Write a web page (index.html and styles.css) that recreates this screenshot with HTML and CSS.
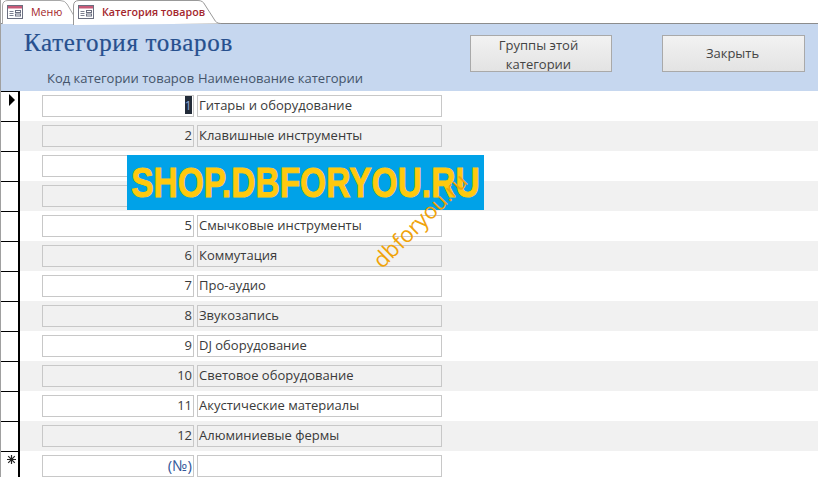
FILE: index.html
```html
<!DOCTYPE html>
<html lang="en">
<head>
  <meta charset="UTF-8" />
  <title>Категория товаров</title>
  <link rel="stylesheet" href="styles.css">
</head>
<body>
  <svg width="0" height="0" class="defs">
    <symbol id="form-icon" viewBox="0 0 16 14">
      <rect x="0.5" y="0.5" width="15" height="13" fill="#fff" stroke="#6b6f80"/>
      <rect x="1" y="1" width="14" height="2.5" fill="#c85a78"/>
      <path d="M2.5 6.5h4M2.5 8.5h4M2.5 10.5h4" stroke="#7c8090"/>
      <rect x="8.5" y="5.5" width="5" height="2" fill="#fff" stroke="#6b6f80"/>
      <rect x="8.5" y="9" width="5" height="2" fill="#fff" stroke="#6b6f80"/>
    </symbol>
  </svg>

  <div class="tabs">
    <div class="tab tab-menu">
      <svg class="tab-shape" width="73" height="24"><path d="M.5 24V6Q.5.5 6 .5H58Q63 .5 65 4L71.5 15V24" fill="#fff" stroke="#a8a8a8"/></svg>
      <svg class="tab-icon"><use href="#form-icon"/></svg>
      <span>Меню</span>
    </div>
    <div class="tab tab-active">
      <svg class="tab-shape" width="150" height="25"><path d="M.5 25V6Q.5.5 6 .5H125Q130 .5 132 5L141 19Q143 23.5 148 23.5" fill="#fff" stroke="#999"/></svg>
      <svg class="tab-icon"><use href="#form-icon"/></svg>
      <span>Категория товаров</span>
    </div>
  </div>

  <div class="form-header">
    <div class="header-top">
      <h1>Категория товаров</h1>
      <button class="btn btn-groups">Группы этой категории</button>
      <button class="btn btn-close">Закрыть</button>
    </div>
    <div class="labels">
      <span class="label-code">Код категории товаров</span>
      <span class="label-name">Наименование категории</span>
    </div>
  </div>

  <div class="rows">
    <div class="row">
      <div class="selector"><span class="arrow"></span></div>
      <div class="field field-code"><span class="caret">1</span></div>
      <div class="field field-name">Гитары и оборудование</div>
    </div>
    <div class="row">
      <div class="selector"></div>
      <div class="field field-code">2</div>
      <div class="field field-name">Клавишные инструменты</div>
    </div>
    <div class="row">
      <div class="selector"></div>
      <div class="field field-code"></div>
      <div class="field field-name"></div>
    </div>
    <div class="row">
      <div class="selector"></div>
      <div class="field field-code"></div>
      <div class="field field-name"></div>
    </div>
    <div class="row">
      <div class="selector"></div>
      <div class="field field-code">5</div>
      <div class="field field-name">Смычковые инструменты</div>
    </div>
    <div class="row">
      <div class="selector"></div>
      <div class="field field-code">6</div>
      <div class="field field-name">Коммутация</div>
    </div>
    <div class="row">
      <div class="selector"></div>
      <div class="field field-code">7</div>
      <div class="field field-name">Про-аудио</div>
    </div>
    <div class="row">
      <div class="selector"></div>
      <div class="field field-code">8</div>
      <div class="field field-name">Звукозапись</div>
    </div>
    <div class="row">
      <div class="selector"></div>
      <div class="field field-code">9</div>
      <div class="field field-name">DJ оборудование</div>
    </div>
    <div class="row">
      <div class="selector"></div>
      <div class="field field-code">10</div>
      <div class="field field-name">Световое оборудование</div>
    </div>
    <div class="row">
      <div class="selector"></div>
      <div class="field field-code">11</div>
      <div class="field field-name">Акустические материалы</div>
    </div>
    <div class="row">
      <div class="selector"></div>
      <div class="field field-code">12</div>
      <div class="field field-name">Алюминиевые фермы</div>
    </div>
    <div class="row">
      <div class="selector">
        <svg class="star" width="9" height="9" viewBox="0 0 9 9"><path d="M4.5 0v9M0 4.5h9M1.2 1.2l6.6 6.6M7.8 1.2L1.2 7.8" stroke="#222" stroke-width="1.2"/></svg>
      </div>
      <div class="field field-code new-id">(№)</div>
      <div class="field field-name"></div>
    </div>
  </div>

  <div class="banner"><span>SHOP.DBFORYOU.RU</span></div>
  <div class="stamp">dbforyou.ru</div>
</body>
</html>
```

FILE: styles.css
```css
html, body {
  height: 100%;
}

body {
  margin: 0;
  background-color: #fff;
  font-family: "Open Sans", "Noto Sans", sans-serif;
  font-size: 13px;
  color: #3a3a3a;
  overflow: hidden;
  position: relative;
}

/* grey edge of the document window */
body::before {
  content: "";
  position: absolute;
  left: 0;
  top: 0;
  bottom: 0;
  width: 1px;
  background-color: #a0a0a0;
  z-index: 2;
}

.defs {
  position: absolute;
}

.tabs {
  display: flex;
  height: 24px;
  box-sizing: border-box;
  padding-left: 2px;
  border-bottom: 1px solid #8c8c8c;
}

.tab {
  display: flex;
  align-items: center;
  gap: 8px;
  height: 23px;
  box-sizing: border-box;
  font-size: 10.7px;
  color: #a4262c;
  position: relative;
}

.tab-shape {
  position: absolute;
  left: 0;
  top: 0;
}

.tab-icon, .tab span {
  position: relative;
}

.tab-menu {
  width: 71px;
  padding-left: 5px;
}

.tab-active {
  width: 145px;
  padding-left: 5px;
  font-weight: 600;
}

.tab-icon {
  width: 16px;
  height: 14px;
  flex: none;
}

.form-header {
  height: 67px;
  background-color: #c6d7ef;
}

.header-top {
  display: flex;
  height: 46px;
}

h1 {
  margin: 4px 0 0 24px;
  width: 446px;
  font-family: "Liberation Serif", serif;
  font-size: 25px;
  font-weight: normal;
  line-height: 30px;
  letter-spacing: 0.7px;
  color: #27508e;
  -webkit-text-stroke: 0.2px #27508e;
}

.btn {
  margin-top: 11px;
  height: 37px;
  box-sizing: border-box;
  border: 1px solid #a9a9a9;
  background: linear-gradient(#f2f2f2, #e3e3e3);
  font-family: inherit;
  font-size: 13px;
  line-height: 19px;
  color: #444;
  overflow: hidden;
}

.btn-groups {
  width: 142px;
  padding: 0 11px 0 6px;
}

.btn-close {
  width: 143px;
  margin-left: 50px;
  padding: 0 10px 0 8px;
}

.labels {
  display: flex;
  gap: 5px;
  line-height: 16px;
  color: #44546a;
}

.label-code {
  width: 146px;
  margin-left: 47px;
  white-space: nowrap;
}

.row {
  display: flex;
  align-items: center;
  height: 30px;
  box-sizing: border-box;
}

.row:nth-child(even) {
  background-color: #f1f1f1;
}

.selector {
  width: 20px;
  height: 30px;
  box-sizing: border-box;
  flex: none;
  background-color: #fff;
  border-top: 1px solid #000;
  border-right: 2px solid #000;
}

.arrow {
  display: block;
  width: 0;
  height: 0;
  margin: 2px 0 0 9px;
  border-top: 6px solid transparent;
  border-bottom: 6px solid transparent;
  border-left: 6px solid #000;
}

.star {
  display: block;
  margin: 3px 0 0 7px;
}

.field {
  height: 22px;
  box-sizing: border-box;
  border: 1px solid #c8c8c8;
  line-height: 19px;
  padding: 0 1px;
  white-space: nowrap;
  background-color: inherit;
}

.row:nth-child(odd) .field {
  background-color: #fff;
}

.field-code {
  width: 152px;
  margin-left: 22px;
  text-align: right;
}

.field-name {
  width: 245px;
  margin-left: 3px;
}

.new-id {
  color: #34589a;
  font-size: 15px;
}

.caret {
  background-color: #222b38;
  color: #8ea6d8;
}

.banner {
  position: absolute;
  left: 127px;
  top: 155px;
  width: 357px;
  height: 55px;
  background-color: #00a2e8;
  color: #ffc90e;
  font-family: "Liberation Sans", sans-serif;
  font-size: 43px;
  font-weight: bold;
  line-height: 55px;
  white-space: nowrap;
  overflow: hidden;
  display: flex;
  justify-content: center;
  -webkit-text-stroke: 1px #ffc90e;
}

.banner span {
  flex: none;
  transform: scaleX(0.78);
}

.stamp {
  position: absolute;
  left: 359px;
  top: 210px;
  width: 116px;
  font-size: 22px;
  line-height: 24px;
  white-space: nowrap;
  color: #f0a30a;
  transform: rotate(-45deg);
}
```
